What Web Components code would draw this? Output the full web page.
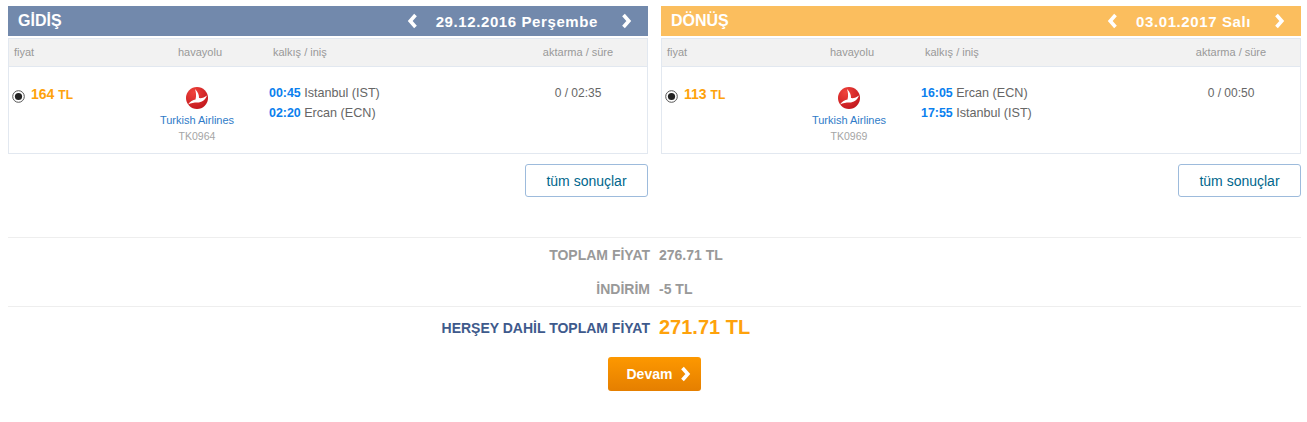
<!DOCTYPE html>
<html lang="tr">
<head>
<meta charset="utf-8">
<title>Uçuş seçimi</title>
<style>
html, body { margin: 0; background: #fff; }
body { font-family: "Liberation Sans", Arial, sans-serif; }
</style>
</head>
<body>
<booking-page>
  <flight-panel title-text="GİDİŞ" date="29.12.2016 Perşembe" color="#7289ac" price="164" code="TK0964"
    dep="00:45" from="Istanbul (IST)" arr="02:20" to="Ercan (ECN)" info="0 / 02:35"></flight-panel>
  <flight-panel style="--first:139px" title-text="DÖNÜŞ" date="03.01.2017 Salı" color="#fbbe5e" price="113" code="TK0969"
    dep="16:05" from="Ercan (ECN)" arr="17:55" to="Istanbul (IST)" info="0 / 00:50"></flight-panel>
  <price-summary slot="summary"></price-summary>
</booking-page>

<script>
const chevron = (dir) => `<svg width="11" height="16" viewBox="0 0 11 16" aria-hidden="true">
  <path d="${dir == "left" ? "M8.5 2 L3.2 8 L8.5 14" : "M2.5 2 L7.8 8 L2.5 14"}" fill="none" stroke="currentColor" stroke-width="3.6"/>
</svg>`;

class BookingPage extends HTMLElement {
    constructor() {
        super();
        this.attachShadow({mode:"open"});
        this.shadowRoot.innerHTML = `
        <style>
        :host { display: block; padding: 6px 6px 0 8px; }
        .panels { display: grid; grid-template-columns: 640px 640px; column-gap: 13px; }
        </style>
        <div class="panels"><slot></slot></div>
        <slot name="summary"></slot>
        `;
    }
}

class FlightPanel extends HTMLElement {
    constructor() {
        super();
        this.attachShadow({mode:"open"});
    }
    connectedCallback() {
        const a = (n) => this.getAttribute(n);
        this.shadowRoot.innerHTML = `
        <style>
        :host { display: block; }
        .head { height: 30px; background: ${a("color")}; color: #fff; display: flex; align-items: center; justify-content: space-between; padding: 0 16px 0 10px; font-weight: bold; }
        .title { font-size: 16px; }
        .nav { display: flex; align-items: center; font-size: 15px; letter-spacing: .6px; }
        .nav svg { display: block; }
        .nav span { margin: 0 23px 0 18px; }
        .box { margin-top: 2px; border: 1px solid #e2e8f0; height: 114px; box-sizing: content-box; }
        .cols { display: grid; grid-template-columns: var(--first, 140px) 96px 1fr 82px 28px; }
        .labels { box-sizing: border-box; height: 28px; padding-bottom: 1px; background: #f2f2f2; border-bottom: 1px solid #e2e8f0; align-items: center; font-size: 11px; color: #999; }
        .labels > div:first-child { padding-left: 5px; }
        .center { text-align: center; white-space: nowrap; }
        .labels .carrier { padding-left: 6px; }
        .depart { padding-left: 28px; }
        .row { padding-top: 16px; }
        .price { display: flex; align-items: center; height: 22px; padding-left: 3px; color: #fea20b; font-weight: bold; font-size: 14px; }
        .price small { font-size: 12px; margin-left: 4px; margin-top: 1px; }
        .radio { margin: 4px 6px 0 0; }
        .airline { padding-top: 3px; font-size: 11px; line-height: 15px; }
        .airline svg { display: block; margin: 0 auto 3px; }
        .airline a { color: #2f7bc8; display: block; }
        .airline span { color: #a5a5a5; display: block; margin-top: 1px; font-size: 10.5px; }
        .times { font-size: 12.6px; color: #666; line-height: 20px; padding-left: 24px; }
        .times b { color: #0b80ee; font-size: 12.4px; }
        .info { font-size: 12px; color: #666; line-height: 20px; }
        .foot { display: flex; justify-content: flex-end; margin-top: 10px; }
        </style>
        <div class="head">
          <div class="title">${a("title-text")}</div>
          <div class="nav">${chevron("left")}<span>${a("date")}</span>${chevron("right")}</div>
        </div>
        <div class="box">
          <div class="cols labels">
            <div>fiyat</div>
            <div class="center carrier">havayolu</div>
            <div class="depart">kalkış / iniş</div>
            <div class="center">aktarma / süre</div>
            <div></div>
          </div>
          <div class="cols row">
            <div class="price">
              <svg class="radio" width="13" height="13" viewBox="0 0 13 13" aria-hidden="true"><circle cx="6.5" cy="6.5" r="5.8" fill="#fff" stroke="#555"/><circle cx="6.5" cy="6.5" r="3.6" fill="#222"/></svg>
              ${a("price")}<small>TL</small>
            </div>
            <div class="center airline">
              <svg width="24" height="24" viewBox="0 0 24 24" aria-hidden="true">
                <defs><radialGradient id="r" cx=".35" cy=".25" r=".85"><stop offset="0" stop-color="#f0433b"/><stop offset="1" stop-color="#bf141b"/></radialGradient></defs>
                <circle cx="12" cy="12" r="11" fill="url(#r)"/>
                <path d="M10 3 C13 6 14.2 9 14 12 C16.5 12.5 19.5 11.5 22 9.5 C20.5 14 16.5 16.5 12.5 16.5 C9 16.5 6 17 3 18.5 C5 15.5 8 14 10.5 13.5 C11.5 10 11 6 10 3 Z" fill="#fff"/>
              </svg>
              <a>Turkish Airlines</a>
              <span>${a("code")}</span>
            </div>
            <div class="times">
              <div><b>${a("dep")}</b> ${a("from")}</div>
              <div><b>${a("arr")}</b> ${a("to")}</div>
            </div>
            <div class="center info">${a("info")}</div>
            <div></div>
          </div>
        </div>
        <div class="foot"><results-button>tüm sonuçlar</results-button></div>
        `;
    }
}

class ResultsButton extends HTMLElement {
    constructor() {
        super();
        this.attachShadow({mode:"open"});
        this.shadowRoot.innerHTML = `
        <style>
        :host { display: flex; align-items: center; justify-content: center; box-sizing: border-box; width: 123px; height: 33px; background: #fff; border: 1px solid #9dbbdc; border-radius: 3px; color: #00668c; font-size: 14px; }
        </style>
        <slot></slot>
        `;
    }
}

class SummaryRow extends HTMLElement {
    constructor() {
        super();
        this.attachShadow({mode:"open"});
    }
    connectedCallback() {
        this.shadowRoot.innerHTML = `
        <style>
        :host { display: grid; grid-template-columns: 642px 1fr; column-gap: 9px; align-items: center; height: var(--h, 34px); font-weight: bold; font-size: 14px; color: #999; }
        .label { text-align: right; color: var(--label, #999); }
        .value { color: var(--value, #999); font-size: var(--size, 14px); margin-top: var(--shift, 0); }
        </style>
        <div class="label">${this.getAttribute("label")}</div>
        <div class="value">${this.getAttribute("value")}</div>
        `;
    }
}

class DevamButton extends HTMLElement {
    constructor() {
        super();
        this.attachShadow({mode:"open"});
        this.shadowRoot.innerHTML = `
        <style>
        :host { display: flex; align-items: center; gap: 8px; box-sizing: border-box; padding-left: 19px; width: 93px; height: 34px; border-radius: 3px; background: linear-gradient(#fd9800, #e57f00); color: #fff; font-weight: bold; font-size: 14px; }
        svg { display: block; }
        </style>
        <slot></slot>${chevron("right")}
        `;
    }
}

class PriceSummary extends HTMLElement {
    constructor() {
        super();
        this.attachShadow({mode:"open"});
        this.shadowRoot.innerHTML = `
        <style>
        :host { display: block; margin-top: 40px; }
        .top { border-top: 1px solid #eee; }
        .total { border-top: 1px solid #eee; --label: #3e5a8c; --value: #fea20b; --size: 20px; --h: 42px; --shift: -2px; }
        .cta { display: flex; justify-content: center; margin-top: 8px; padding-right: 1px; }
        </style>
        <div class="top">
          <summary-row label="TOPLAM FİYAT" value="276.71 TL"></summary-row>
          <summary-row label="İNDİRİM" value="-5 TL"></summary-row>
        </div>
        <summary-row class="total" label="HERŞEY DAHİL TOPLAM FİYAT" value="271.71 TL"></summary-row>
        <div class="cta"><devam-button>Devam</devam-button></div>
        `;
    }
}

customElements.define("booking-page", BookingPage);
customElements.define("results-button", ResultsButton);
customElements.define("flight-panel", FlightPanel);
customElements.define("summary-row", SummaryRow);
customElements.define("devam-button", DevamButton);
customElements.define("price-summary", PriceSummary);
</script>
</body>
</html>
